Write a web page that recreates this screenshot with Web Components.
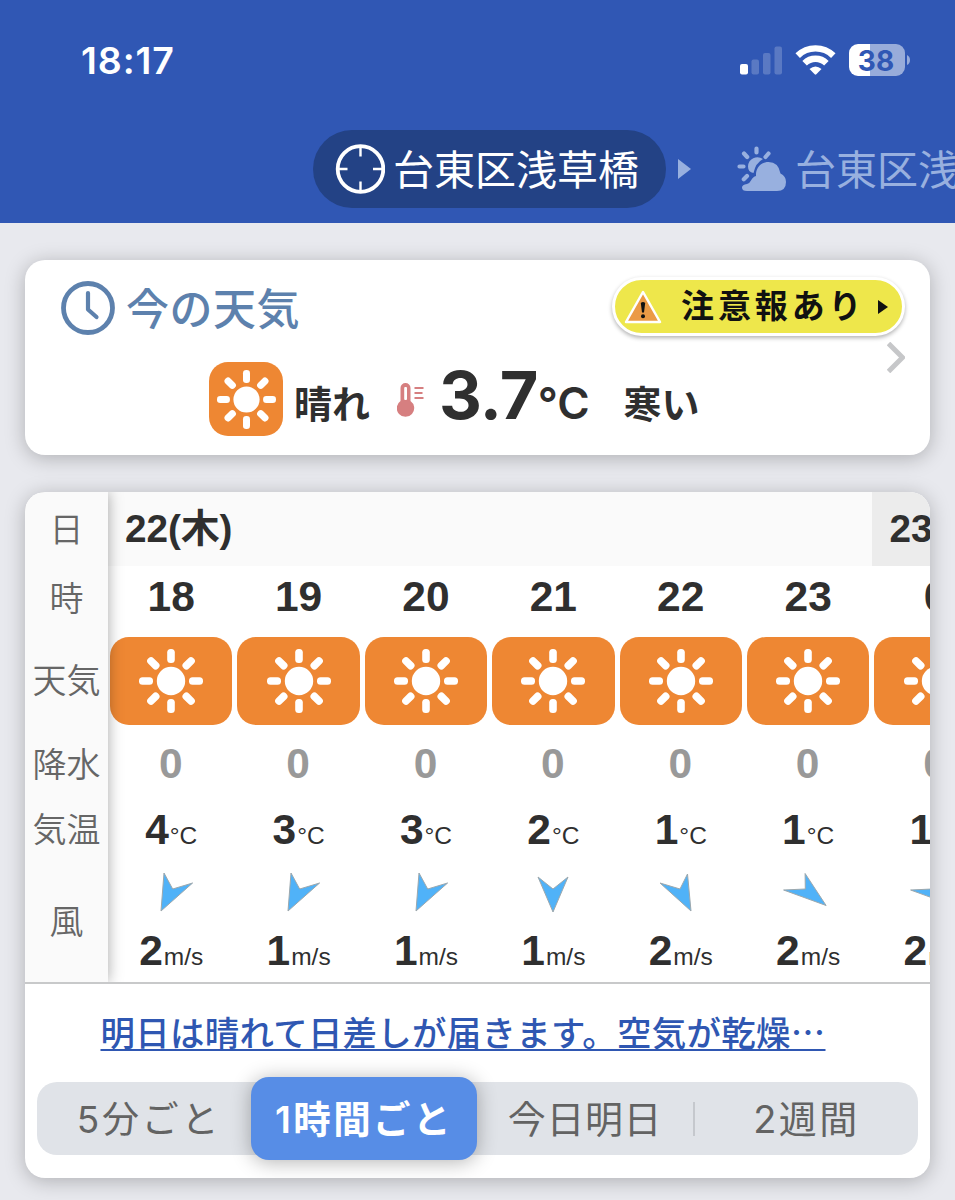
<!DOCTYPE html>
<html lang="ja">
<head>
<meta charset="utf-8">
<title>今の天気</title>
<style>
  body {
    margin: 0;
    width: 955px;
    height: 1200px;
    overflow: hidden;
    background: #e8e9ee;
    color: #2f2f2f;
    font-family: 'Noto Sans CJK JP', sans-serif;
  }
</style>
</head>
<body>
<weather-app></weather-app>

<script>
class StatusBar extends HTMLElement {
  constructor() {
    super();
    this.attachShadow({ mode: 'open' });
  }

  connectedCallback() {
    this.shadowRoot.innerHTML = `
      <style>
        :host {
          display: flex;
          align-items: center;
          height: 32px;
          padding: 44px 44px 0 81px;
          color: #fff;
          font-family: Inter, sans-serif;
        }
        .time {
          flex: 1;
          margin-top: 2px;
          font-size: 37.5px;
          font-weight: 600;
          line-height: 32px;
          letter-spacing: 0.9px;
        }
        svg { display: block; }
        .wifi { margin: 0 13px; }
        .battery {
          width: 56px;
          height: 32px;
          border-radius: 9px;
          background: linear-gradient(90deg, #fff 38%, #98acda 38%);
          color: #3057b4;
          font-size: 28px;
          font-weight: 700;
          line-height: 34px;
          text-align: center;
          text-indent: -2px;
        }
        .cap { margin-left: 1px; }
      </style>
      <span class="time">${this.getAttribute('time')}</span>
      <svg width="42" height="30" viewBox="0 0 42 30" fill="#fff">
        <rect x="0" y="19" width="8" height="10.5" rx="2"/>
        <g opacity=".2">
          <rect x="11.500" y="14.500" width="7.500" height="15" rx="2"/>
          <rect x="23" y="8" width="7.500" height="21.500" rx="2"/>
          <rect x="34.500" y="1.500" width="7.500" height="28" rx="2"/>
        </g>
      </svg>
      <svg class="wifi" width="41" height="30" viewBox="0 0 41 30">
        <g fill="none" stroke="#fff" stroke-width="6.400">
          <path d="M2.700 10.600a25.500 25.500 0 0 1 35.600 0"/>
          <path d="M9.600 18.200a15.500 15.500 0 0 1 21.800 0"/>
        </g>
        <path d="M14.500 24q6-5 12 0l-5.200 5.300q-.8.700-1.600 0z" fill="#fff"/>
      </svg>
      <div class="battery">${this.getAttribute('battery')}</div>
      <svg class="cap" width="5" height="12" viewBox="0 0 5 12"><path d="M1 1q3 1.500 3 5t-3 5z" fill="#98acda"/></svg>
    `;
  }
}

class PlaceTabs extends HTMLElement {
  constructor() {
    super();
    this.attachShadow({ mode: 'open' });
  }

  connectedCallback() {
    this.shadowRoot.innerHTML = `
      <style>
        :host {
          display: flex;
          align-items: center;
          height: 78px;
          margin-top: 54px;
          padding-left: 313px;
          color: #fff;
          font-size: 41px;
          white-space: nowrap;
          overflow: hidden;
        }
        svg { display: block; flex: none; }
        span { line-height: 74px; padding-bottom: 4px; }
        .current {
          box-sizing: border-box;
          flex: none;
          display: flex;
          align-items: center;
          width: 353px;
          height: 78px;
          padding-left: 22px;
          border-radius: 39px;
          background: #234285;
        }
        .current span { margin-left: 8px; }
        .arrow { margin: 0 46px 0 12px; }
        .next { color: #98b0df; margin-left: 8px; }
      </style>
      <div class="current">
        <svg width="50" height="50" viewBox="0 0 50 50" fill="none" stroke="#fff">
          <circle cx="25.500" cy="25" r="22.800" stroke-width="3.800"/>
          <path d="M25.500 3v9.500M25.500 37.500V47M3 25h9.500M38 25h9.500" stroke-width="2.400"/>
        </svg>
        <span>台東区浅草橋</span>
      </div>
      <svg class="arrow" width="13" height="20" viewBox="0 0 13 20"><path d="M0 0l13 10L0 20z" fill="#98b0df"/></svg>
      <svg width="50" height="46" viewBox="0 0 50 46" fill="#98b0df">
        <g stroke="#98b0df" stroke-width="4.200" stroke-linecap="round">
          <path d="M19.500 2.500v4M7 7.500l3.200 3.500M31.500 7.500l-3 3.500M2.500 20.500h4M10 30l-3.200 3.200"/>
        </g>
        <path d="M11 20.500a9.500 9.500 0 0 1 15-7.500q-7.500 4-9.500 14-5.500-1-5.500-6.500z"/>
        <path d="M10 45q-5 0-5-3.500 0-3 5-3.500 2.500-.5 4-3.500 2-4 5-4.500C18.500 22 24 16 31.500 16q10 0 12 11.500 5.500 2.500 5.500 8.500 0 9-9 9z"/>
      </svg>
      <span class="next">台東区浅草橋</span>
    `;
  }
}

class SunTile extends HTMLElement {
  constructor() {
    super();
    this.attachShadow({ mode: 'open' });
  }

  connectedCallback() {
    const rays = [0, 45, 90, 135, 180, 225, 270, 315]
      .map(a => `<rect x="-3.800" y="-32" width="7.600" height="14" rx="3.500" transform="rotate(${a})"/>`)
      .join('');
    this.shadowRoot.innerHTML = `
      <style>
        :host {
          display: flex;
          align-items: center;
          justify-content: center;
          border-radius: 19px;
          background: #ee8733;
        }
        svg { display: block; width: var(--sun-size, 64px); height: var(--sun-size, 64px); }
      </style>
      <svg viewBox="-32 -32 64 64" fill="#fff"><circle r="14.200"/>${rays}</svg>
    `;
  }
}

class AlertBadge extends HTMLElement {
  constructor() {
    super();
    this.attachShadow({ mode: 'open' });
  }

  connectedCallback() {
    this.shadowRoot.innerHTML = `
      <style>
        :host {
          box-sizing: border-box;
          display: flex;
          align-items: center;
          width: 293px;
          height: 59px;
          padding-left: 8px;
          border: 3px solid #fff;
          border-radius: 30px;
          background: #eee74b;
          box-shadow: 0 2px 4px rgba(0, 0, 0, 0.3);
          color: #111;
          font-size: 33px;
          font-weight: 700;
          line-height: 53px;
          letter-spacing: 3.9px;
          white-space: nowrap;
        }
        svg { display: block; flex: none; }
        span { margin: -4px 12px 0 18px; }
      </style>
      <svg width="40" height="36" viewBox="0 0 40 36">
        <path d="M20 3L37 33H3z" fill="#eb9a45" stroke="#fff" stroke-width="2.500" stroke-linejoin="round"/>
        <path d="M17.800 14q2.200-2 4.400 0l-1.200 9.500h-2z" fill="#111"/>
        <circle cx="20" cy="27.200" r="2" fill="#111"/>
      </svg>
      <span><slot></slot></span>
      <svg width="10" height="14" viewBox="0 0 10 14"><path d="M0 0l10 7-10 7z" fill="#111"/></svg>
    `;
  }
}

class NowCard extends HTMLElement {
  constructor() {
    super();
    this.attachShadow({ mode: 'open' });
  }

  connectedCallback() {
    this.shadowRoot.innerHTML = `
      <style>
        :host {
          box-sizing: border-box;
          display: block;
          height: 195px;
          margin: 37px 25px 0;
          padding: 17px 25px 0 36px;
          border-radius: 20px;
          background: #fff;
          box-shadow: 0 3px 20px rgba(0, 0, 0, 0.25);
        }
        svg { display: block; flex: none; }
        .head { display: flex; height: 62px; align-items: center; }
        h1 {
          flex: 1;
          margin: -5px 0 0 11px;
          color: #5d81ad;
          font-size: 43px;
          font-weight: 500;
          line-height: 62px;
          letter-spacing: 0.5px;
        }
        alert-badge { margin-top: -3px; }
        .chevron { margin: 3px 0 0 auto; }
        .now {
          display: flex;
          align-items: center;
          height: 74px;
          margin: -11px 0 0 148px;
          font-size: 38px;
          font-weight: 700;
          white-space: nowrap;
        }
        sun-tile { width: 74px; height: 74px; --sun-size: 59px; }
        .label { margin: 5px 0 0 11px; line-height: 60px; }
        .thermo { margin: 3px 0 0 27px; }
        .temp {
          margin: 0 0 0 14px;
          font-family: Inter, sans-serif;
          font-size: 66.5px;
          font-weight: 700;
          line-height: 74px;
          letter-spacing: -0.7px;
        }
        .temp small { font-size: 44px; font-weight: 600; letter-spacing: 0; }
        .feel { margin: 5px 0 0 34px; line-height: 60px; }
      </style>
      <div class="head">
        <svg width="54" height="54" viewBox="0 0 54 54" fill="none" stroke="#5d81ad">
          <circle cx="27" cy="27" r="24.500" stroke-width="4.800"/>
          <path d="M27 12v16.500l8.500 7.500" stroke-width="4.200" stroke-linecap="round" stroke-linejoin="round"/>
        </svg>
        <h1>今の天気</h1>
        <alert-badge>注意報あり</alert-badge>
      </div>
      <svg class="chevron" width="18" height="31" viewBox="0 0 18 31"><path d="M1.500 1.500L15.500 15.500 1.500 29.500" fill="none" stroke="#c6c7c9" stroke-width="5"/></svg>
      <div class="now">
        <sun-tile></sun-tile>
        <span class="label">晴れ</span>
        <svg class="thermo" width="28" height="38" viewBox="0 0 28 38">
          <path d="M3.500 19V6a5 5 0 0 1 10 0v13a8.700 8.700 0 1 1-10 0z" fill="#d67f80"/>
          <rect x="7.200" y="5" width="2.800" height="13" rx="1" fill="#fff"/>
          <path d="M17.500 6h9M17.500 11h8M17.500 16h9" stroke="#d67f80" stroke-width="1.900"/>
        </svg>
        <span class="temp">3.7<small>°C</small></span>
        <span class="feel">寒い</span>
      </div>
    `;
  }
}

// Arrow outlines per wind direction, in a 50x42 box
const WIND_SHAPES = {
  ssw: '18,2 26.7,18 46.6,12 15,40',
  s: '10,6 25,18 40,6 25,41',
  sse: '4,12 24,18 31.5,3 35,40',
  se: '0.6,19 22.3,18 22.1,2.5 43.1,34.5'
};

class HourColumn extends HTMLElement {
  constructor() {
    super();
    this.attachShadow({ mode: 'open' });
  }

  connectedCallback() {
    const get = name => this.getAttribute(name);
    this.shadowRoot.innerHTML = `
      <style>
        :host {
          flex: none;
          display: grid;
          grid-template-rows: 71px 88px 80px 52px 126px;
          width: 127.4px;
          font-family: 'Liberation Sans', sans-serif;
          font-size: 42.5px;
          text-align: center;
          white-space: nowrap;
        }
        .hour { line-height: 61px; padding-right: 1px; }
        sun-tile { margin: 0 3px 0 2px; }
        .rain { color: #999; line-height: 77px; padding-right: 2px; }
        .temp { line-height: 50px; padding-right: 1px; }
        small { font-size: 24.5px; margin-left: 1px; }
        svg { display: block; margin: 14px 0 0 38px; }
        .speed { line-height: 54px; margin-top: 11px; padding-right: 1px; }
      </style>
      <b class="hour">${get('hour')}</b>
      <sun-tile></sun-tile>
      <b class="rain">${get('rain')}</b>
      <div class="temp"><b>${get('temp')}</b><small>°C</small></div>
      <div>
        <svg width="50" height="42" viewBox="0 0 50 42"><polygon points="${WIND_SHAPES[get('wind')]}" fill="#50b2f8" stroke="#9da8ad" stroke-width="1"/></svg>
        <div class="speed"><b>${get('speed')}</b><small>m/s</small></div>
      </div>
    `;
  }
}

class RangeTabs extends HTMLElement {
  constructor() {
    super();
    this.attachShadow({ mode: 'open' });
  }

  connectedCallback() {
    this.shadowRoot.innerHTML = `
      <style>
        :host {
          display: grid;
          grid-template: 73px / 214px 226px 218px 1fr;
          align-items: center;
          height: 73px;
          margin: 0 12px;
          border-radius: 20px;
          background: #e0e3e8;
          color: #636363;
          font-family: Inter, 'Noto Sans CJK JP', sans-serif;
          font-size: 38px;
          text-align: center;
          white-space: nowrap;
        }
        span { line-height: 73px; }
        .first { padding: 2px 0 0 10px; font-size: 37px; letter-spacing: 2.7px; }
        .active {
          height: 83px;
          margin: -5px 0;
          border-radius: 18px;
          background: #578de6;
          box-shadow: 0 2px 20px rgba(0, 0, 0, 0.3);
          color: #fff;
          font-size: 37.5px;
          font-weight: 600;
          line-height: 86px;
          letter-spacing: 2.4px;
        }
        .third { line-height: 34px; border-right: 2px solid #c5c8cd; letter-spacing: 0.6px; }
        .last { padding-top: 2px; letter-spacing: 2.5px; }
      </style>
      <span class="first">5分ごと</span>
      <span class="active">1時間ごと</span>
      <span class="third">今日明日</span>
      <span class="last">2週間</span>
    `;
  }
}

class ForecastCard extends HTMLElement {
  constructor() {
    super();
    this.attachShadow({ mode: 'open' });
  }

  connectedCallback() {
    const hours = [
      ['18', '4', 'ssw', '2'],
      ['19', '3', 'ssw', '1'],
      ['20', '3', 'ssw', '1'],
      ['21', '2', 's', '1'],
      ['22', '1', 'sse', '2'],
      ['23', '1', 'se', '2'],
      ['0', '1', 'se', '2']
    ];
    this.shadowRoot.innerHTML = `
      <style>
        :host {
          display: block;
          height: 686px;
          margin: 37px 25px 0;
          border-radius: 20px;
          background: #fff;
          box-shadow: 0 3px 20px rgba(0, 0, 0, 0.25);
          overflow: hidden;
        }
        .table { display: flex; height: 490px; border-bottom: 2px solid #c8c9ca; overflow: hidden; }
        .labels {
          flex: none;
          box-sizing: border-box;
          display: grid;
          grid-template-rows: 72px 65px 100px 68px 62px 122px;
          align-items: center;
          width: 83px;
          background: #fafafa;
          box-shadow: 0 0 14px rgba(0, 0, 0, 0.35);
          z-index: 1;
          color: #666;
          font-size: 34px;
          font-weight: 350;
          line-height: 50px;
          text-align: center;
          white-space: nowrap;
        }
        .scroller { flex: 1; min-width: 0; overflow: hidden; }
        .dates { display: flex; height: 74px; }
        .dates div {
          box-sizing: border-box;
          flex: none;
          width: 764.4px;
          padding-left: 17px;
          background: #fafafa;
          font-family: 'Liberation Sans', 'Noto Sans CJK JP', sans-serif;
          font-size: 38.7px;
          font-weight: 700;
          line-height: 73px;
        }
        .dates .tomorrow { background: #ececec; }
        .hours { display: flex; }
        .summary {
          height: 98px;
          padding-right: 29px;
          color: #2f57b2;
          font-size: 34.45px;
          font-weight: 500;
          line-height: 94px;
          letter-spacing: 0.3px;
          text-align: center;
          white-space: nowrap;
        }
        .summary a { text-decoration: underline 2px; text-underline-offset: 3px; }
      </style>
      <div class="table">
        <div class="labels">
          <span>日</span><span>時</span><span>天気</span><span>降水</span><span>気温</span><span>風</span>
        </div>
        <div class="scroller">
          <div class="dates"><div>22(木)</div><div class="tomorrow">23(金)</div></div>
          <div class="hours">
            ${hours.map(([hour, temp, wind, speed]) => `<hour-column hour="${hour}" rain="0" temp="${temp}" wind="${wind}" speed="${speed}"></hour-column>`).join('')}
          </div>
        </div>
      </div>
      <div class="summary"><a>明日は晴れて日差しが届きます。空気が乾燥…</a></div>
      <range-tabs></range-tabs>
    `;
  }
}

class WeatherApp extends HTMLElement {
  constructor() {
    super();
    this.attachShadow({ mode: 'open' });
  }

  connectedCallback() {
    this.shadowRoot.innerHTML = `
      <style>
        :host { display: block; }
        header { height: 223px; background: #3057b4; }
        header, main { display: flow-root; }
      </style>
      <header>
        <status-bar time="18:17" battery="38"></status-bar>
        <place-tabs></place-tabs>
      </header>
      <main>
        <now-card></now-card>
        <forecast-card></forecast-card>
      </main>
    `;
  }
}

customElements.define('status-bar', StatusBar);
customElements.define('place-tabs', PlaceTabs);
customElements.define('sun-tile', SunTile);
customElements.define('alert-badge', AlertBadge);
customElements.define('now-card', NowCard);
customElements.define('hour-column', HourColumn);
customElements.define('range-tabs', RangeTabs);
customElements.define('forecast-card', ForecastCard);
customElements.define('weather-app', WeatherApp);
</script>
</body>
</html>
